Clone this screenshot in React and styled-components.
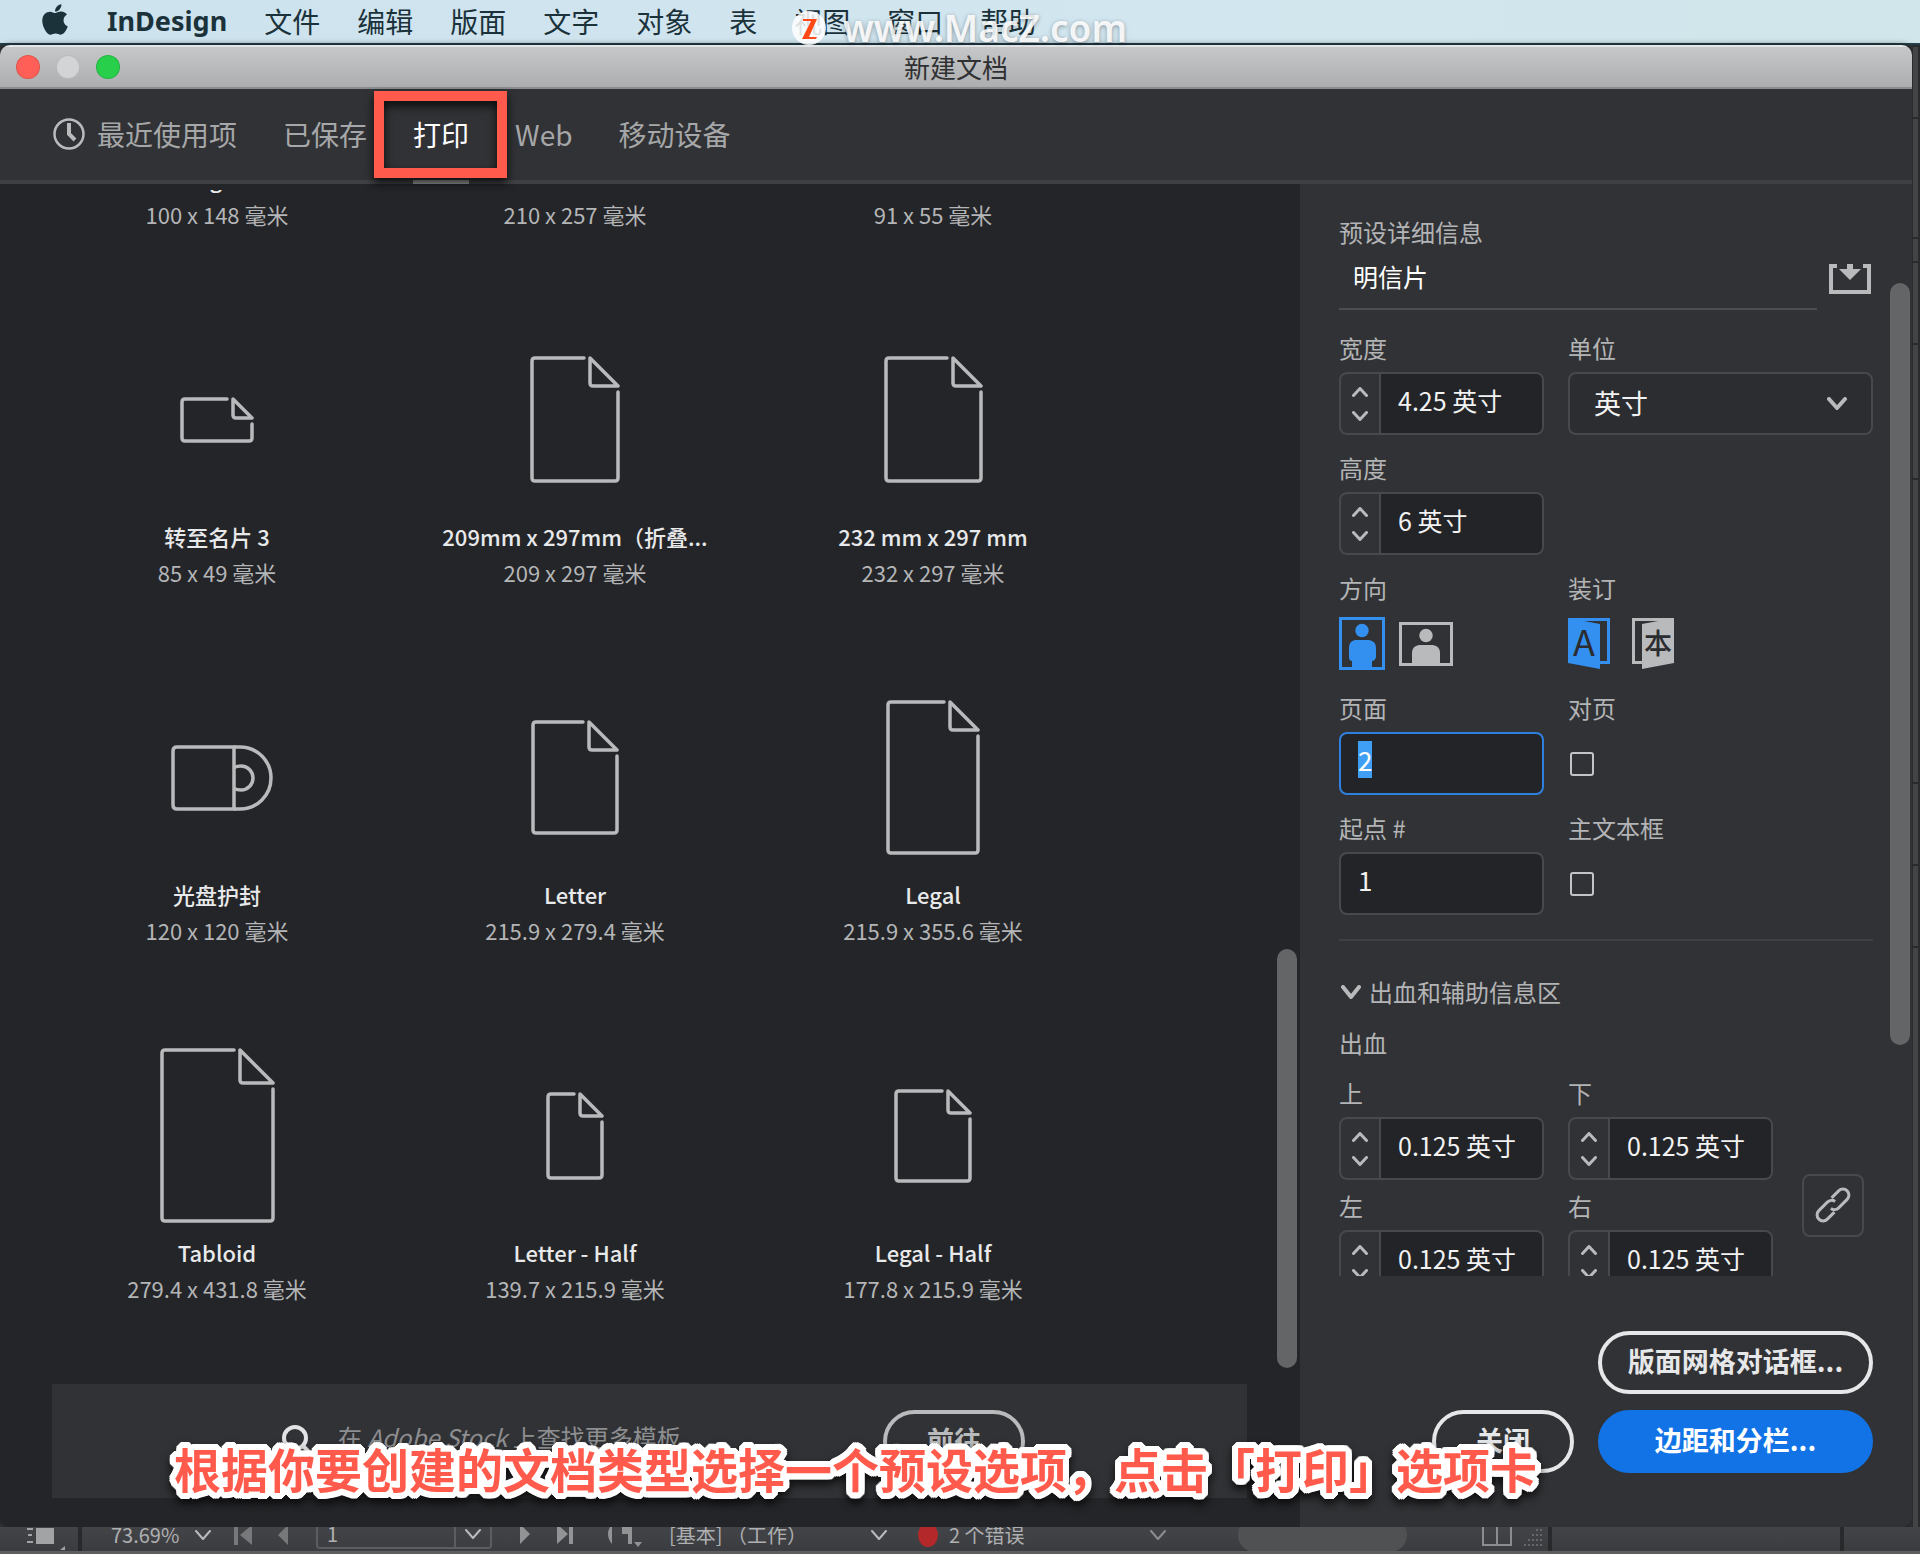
import { useEffect, useRef, useState } from "react";
import styled, { createGlobalStyle, css } from "styled-components";
import { FaApple } from "react-icons/fa";

const GlobalStyle = createGlobalStyle`
  * {
    box-sizing: border-box;
  }
  body {
    margin: 0;
    background: #3b3c3f;
    font-family: "Noto Sans CJK SC", "Noto Sans", sans-serif;
  }
  button, input, select {
    margin: 0;
    padding: 0;
    border: 0;
    background: none;
    color: inherit;
    font: inherit;
  }
`;

const Desktop = styled.div`
  position: relative;
  display: flex;
  flex-direction: column;
  height: 100vh;
  overflow: hidden;
  background: #3b3c3f;
`;

/* ---- menu bar ---- */

const MenuBar = styled.nav`
  display: flex;
  align-items: center;
  gap: 37px;
  height: 45px;
  flex: none;
  padding: 0 42px 2px;
  background: linear-gradient(90deg, #cce2ed, #d2e6ef 60%, #d0e6ea);
  border-bottom: 2px solid #24404c;
  color: #1b323b;
`;

const AppleMark = styled.span`
  display: flex;
  width: 28px;
  padding-bottom: 2px;
  svg {
    width: 26px;
    height: 35px;
    flex: none;
  }
`;

const MenuItem = styled.button`
  font-size: ${({ $app }) => ($app ? 27 : 28)}px;
  font-weight: ${({ $app }) => ($app ? 700 : 400)};
  ${({ $app }) => $app && 'font-family: "Noto Sans", sans-serif;'}
  line-height: 36px;
  white-space: nowrap;
`;

const Watermark = styled.div`
  position: absolute;
  left: 792px;
  top: 5px;
  display: flex;
  align-items: center;
  gap: 16px;
  color: rgba(255, 255, 255, 0.9);
  font-family: "Noto Sans", sans-serif;
  font-size: 37px;
  font-weight: 600;
  line-height: 46px;
  text-shadow: 0 1px 4px rgba(0, 0, 0, 0.35);
`;

/* ---- dialog ---- */

const Workspace = styled.div`
  display: flex;
  flex: 1;
  min-height: 0;
  background: #333437;
`;

const Dialog = styled.main`
  display: flex;
  flex: 1;
  flex-direction: column;
  min-width: 0;
  border-radius: 10px;
  overflow: hidden;
  background: #313235;
  box-shadow: 0 0 6px rgba(0, 0, 0, 0.6);
`;

const DockEdge = styled.div`
  display: flex;
  flex-direction: column;
  width: 8px;
  padding: 2px 2px 0 1px;
  gap: 2px;
  background: #2a2b2d;
`;

const DockPanel = styled.div`
  flex: ${({ $size }) => $size} 1 0;
  background: #434446;
`;

const TitleBar = styled.header`
  position: relative;
  display: flex;
  align-items: center;
  justify-content: center;
  flex: none;
  height: 44px;
  border-top: 2px solid #e4e5e6;
  border-bottom: 2px solid #8b8c8e;
  background: linear-gradient(#c6c7c8, #adaeb0);
`;

const Lights = styled.div`
  position: absolute;
  left: 16px;
  display: flex;
  gap: 16px;
`;

const Light = styled.button`
  width: 24px;
  height: 24px;
  border-radius: 50%;
  border: 1px solid rgba(0, 0, 0, 0.12);
  background: ${({ $color }) => $color};
`;

const Title = styled.h1`
  margin: 0;
  color: #303133;
  font-size: 26px;
  font-weight: 400;
  line-height: 36px;
`;

const Tabs = styled.div`
  display: flex;
  gap: 46px;
  flex: none;
  height: 95px;
  padding-left: 53px;
  border-bottom: 4px solid #3f4043;
`;

const Tab = styled.button`
  position: relative;
  display: flex;
  align-items: center;
  gap: 12px;
  margin-bottom: -4px;
  padding-bottom: 2px;
  border-bottom: 4px solid ${({ $active }) => ($active ? "#9d9ea0" : "transparent")};
  color: ${({ $active }) => ($active ? "#ffffff" : "#a6a7a8")};
  font-size: 28px;
  white-space: nowrap;
`;

const TabMarker = styled.span`
  position: absolute;
  top: 2px;
  right: -38px;
  bottom: 2px;
  left: -39px;
  border: 10px solid #ff5a4b;
  filter: drop-shadow(0 5px 5px rgba(0, 0, 0, 0.8));
`;

const Body = styled.div`
  display: flex;
  flex: 1;
  min-height: 0;
`;

const Browser = styled.section`
  display: flex;
  flex: 1;
  flex-direction: column;
  min-width: 0;
  padding: 6px 0 29px;
  background: #242528;
`;

const BrowserScroll = styled.div`
  display: flex;
  flex: 1;
  min-height: 0;
  padding-right: 3px;
`;

const PresetViewport = styled.div`
  display: flex;
  flex: 1;
  flex-direction: column;
  justify-content: flex-end;
  min-width: 0;
  overflow: hidden;
`;

const PresetGrid = styled.div`
  display: grid;
  grid-template-columns: repeat(auto-fill, 358px);
  row-gap: 87px;
  padding: 0 0 64px 38px;
`;

const Preset = styled.button`
  display: flex;
  flex-direction: column;
  align-items: center;
  line-height: 36px;
  font-size: 22px;
`;

const PresetArt = styled.span`
  display: flex;
  align-items: center;
  justify-content: center;
  height: 199px;
  padding-top: 2px;
`;

const PresetName = styled.span`
  white-space: nowrap;
  color: #e8e9ea;
  font-weight: 500;
`;

const PresetSize = styled.span`
  color: #b4b5b7;
  white-space: nowrap;
`;

const ScrollTrack = styled.div`
  display: flex;
  flex: none;
  flex-direction: column;
  width: 20px;
`;

const ScrollSpace = styled.div`
  flex: ${({ $size }) => $size} 1 0;
`;

const ScrollThumb = styled.div`
  flex: ${({ $size }) => $size} 1 0;
  border-radius: 10px;
  background: #646567;
`;

const StockBar = styled.div`
  display: flex;
  align-items: center;
  flex: none;
  height: 114px;
  margin: 14px 53px 0 52px;
  padding-left: 228px;
  background: #313235;
`;

const StockText = styled.p`
  flex: none;
  width: 545px;
  margin: 0 0 10px 20px;
  color: #8d8e90;
  font-size: 24px;
  white-space: nowrap;
`;

const PillButton = styled.button`
  flex: none;
  min-width: 142px;
  height: 63px;
  padding: 0 28px 4px;
  border: 4px solid ${({ $tone }) => $tone};
  border-radius: 32px;
  color: ${({ $tone }) => $tone};
  font-size: 27px;
  font-weight: 700;
  white-space: nowrap;
  ${({ $primary }) =>
    $primary &&
    css`
      border-color: #1273e6;
      background: #1273e6;
      color: #ffffff;
    `}
`;

/* ---- details panel ---- */

const Details = styled.aside`
  display: flex;
  flex: none;
  flex-direction: column;
  width: 612px;
`;

const DetailsScroll = styled.div`
  display: flex;
  flex: 1;
  min-height: 0;
  padding-right: 2px;
`;

const DetailsViewport = styled.div`
  flex: 1;
  padding: 34px 17px 0 39px;
  overflow: hidden;
`;

const Label = styled.label`
  display: block;
  padding-bottom: 2px;
  color: #b3b4b6;
  font-size: 24px;
  line-height: 28px;
  white-space: nowrap;
`;

const NameRow = styled.div`
  display: flex;
  align-items: center;
  gap: 12px;
  margin-bottom: 24px;
  padding-right: 2px;
`;

const NameInput = styled.input`
  flex: 1;
  min-width: 0;
  height: 62px;
  padding: 0 14px 4px;
  border-bottom: 2px solid #4c4d50;
  color: #ffffff;
  font-size: 25px;
`;

const IconButton = styled.button`
  display: flex;
  align-items: center;
`;

const FieldGrid = styled.div`
  display: grid;
  grid-template-columns: 205px 1fr;
  gap: 19px 24px;
`;

const FieldBox = styled.div`
  display: flex;
  flex-direction: column;
  gap: 8px;
`;

const frame = css`
  height: 63px;
  border: 2px solid #48494c;
  border-radius: 8px;
`;

const StepperFrame = styled.div`
  ${frame}
  display: flex;
  overflow: hidden;
`;

const StepperButtons = styled.div`
  display: flex;
  flex: none;
  flex-direction: column;
  align-items: center;
  justify-content: center;
  gap: 14px;
  width: 40px;
  border-right: 2px solid #48494c;
`;

const StepButton = styled.button`
  display: flex;
`;

const StepperInput = styled.input`
  flex: 1;
  min-width: 0;
  padding: 0 0 8px 17px;
  background: #232427;
  color: #f2f2f3;
  font-size: 25px;
`;

const TextInput = styled.input`
  ${frame}
  width: 205px;
  padding: 0 17px 8px;
  background: #232427;
  color: #f2f2f3;
  font-size: 26px;
  &:focus {
    outline: none;
    border-color: #2f80de;
  }
  &::selection {
    background: #3f9ff5;
    color: #ffffff;
  }
`;

const SelectFrame = styled.div`
  ${frame}
  display: grid;
  grid-template-columns: 1fr 44px;
  align-items: center;
  background: #2c2d30;
  color: #f2f2f3;
  select {
    grid-area: 1 / 1 / 2 / 3;
    height: 59px;
    padding: 0 0 3px 24px;
    appearance: none;
    font-size: 27px;
  }
  svg {
    grid-area: 1 / 2;
    pointer-events: none;
  }
`;

const IconRow = styled.div`
  display: flex;
  align-items: center;
  gap: ${({ $gap }) => $gap}px;
  height: 63px;
`;

const CheckRow = styled.div`
  display: flex;
  align-items: center;
  height: 63px;
  padding-left: 2px;
`;

const Checkbox = styled.input`
  appearance: none;
  width: 24px;
  height: 24px;
  border: 2px solid #c3c4c5;
  border-radius: 3px;
  &:checked {
    background: #c3c4c5;
  }
`;

const Divider = styled.hr`
  height: 2px;
  margin: 24px 0 36px;
  border: 0;
  background: #3f4043;
`;

const SectionToggle = styled.button`
  display: flex;
  align-items: center;
  gap: 8px;
  padding-left: 2px;
  margin-bottom: 21px;
  color: #b3b4b6;
  font-size: 24px;
  line-height: 30px;
`;

const GroupTitle = styled.div`
  margin-bottom: 21px;
  color: #b3b4b6;
  font-size: 24px;
  line-height: 30px;
`;

const Bleed = styled.div`
  display: flex;
  align-items: center;
  gap: 29px;
`;

const BleedGrid = styled.div`
  display: grid;
  grid-template-columns: 205px 205px;
  gap: 12px 24px;
`;

const LinkButton = styled.button`
  ${frame}
  display: flex;
  align-items: center;
  justify-content: center;
  width: 62px;
  margin-top: 38px;
`;

const Actions = styled.footer`
  display: flex;
  flex: none;
  flex-direction: column;
  align-items: flex-end;
  gap: 16px;
  padding: 55px 39px 54px;
`;

const ActionRow = styled.div`
  display: flex;
  gap: 24px;
`;

const WideAction = styled(PillButton)`
  width: 275px;
  padding: 0 0 4px;
`;

/* ---- status bar behind the dialog ---- */

const StatusBar = styled.footer`
  display: flex;
  flex: none;
  align-items: flex-end;
  height: 27px;
  overflow: hidden;
  border-bottom: 3px solid #5d5e60;
  background: linear-gradient(#434447, #3b3c3f);
  color: #aeafb1;
  font-size: 20px;
  line-height: 32px;
  white-space: nowrap;
`;

const StatusCell = styled.div`
  display: flex;
  align-items: center;
  flex: ${({ $grow }) => ($grow ? 1 : "none")};
  width: ${({ $width }) => $width}px;
  height: 32px;
  padding-left: ${({ $pad = 0 }) => $pad}px;
  border-right: ${({ $line }) => ($line ? "4px solid #29292b" : "0")};
`;

const PageBox = styled.div`
  display: flex;
  align-items: center;
  flex: none;
  width: 176px;
  height: 30px;
  margin: 0 24px 2px 0;
  border: 2px solid #5c5d5f;
  border-radius: 4px;
  input {
    flex: 1;
    min-width: 0;
    padding-left: 9px;
    font-size: 20px;
  }
  svg {
    box-sizing: content-box;
    padding: 10px 9px;
    border-left: 2px solid #5c5d5f;
  }
`;

const ErrorDot = styled.span`
  width: 20px;
  height: 24px;
  margin-right: 11px;
  border-radius: 50%;
  background: #b3292b;
`;

const HorizontalThumb = styled.div`
  width: 169px;
  height: 34px;
  border-radius: 17px;
  background: #505153;
`;

// a ring of hard shadows gives the caption an outline with round corners
const outline = (radius, color) =>
  Array.from({ length: 24 }, (_, i) => {
    const angle = (i / 24) * Math.PI * 2;
    return `${Math.round(Math.cos(angle) * radius)}px ${Math.round(Math.sin(angle) * radius)}px 0 ${color}`;
  }).join(", ");

const Caption = styled.div`
  position: absolute;
  left: 174px;
  bottom: 56px;
  color: #ff5a4b;
  font-size: 47px;
  font-weight: 700;
  line-height: 60px;
  white-space: nowrap;
  text-shadow: ${outline(3, "#ffffff")}, ${outline(6, "#ffffff")};
  filter: drop-shadow(0 5px 4px rgba(0, 0, 0, 0.7));
`;

const menus = ["文件", "编辑", "版面", "文字", "对象", "表", "视图", "窗口", "帮助"];

const tabs = ["最近使用项", "已保存", "打印", "Web", "移动设备"];

const presets = [
  { name: "Hagaki", size: "100 x 148 毫米", w: 60, h: 88, fold: 24 },
  { name: "B5", size: "210 x 257 毫米", w: 90, h: 110, fold: 30 },
  { name: "Card", size: "91 x 55 毫米", w: 74, h: 46, fold: 22 },
  { name: "转至名片 3", size: "85 x 49 毫米", w: 74, h: 46, fold: 22 },
  { name: "209mm x 297mm（折叠...", size: "209 x 297 毫米", w: 90, h: 127, fold: 31 },
  { name: "232 mm x 297 mm", size: "232 x 297 毫米", w: 99, h: 127, fold: 31 },
  { name: "光盘护封", size: "120 x 120 毫米", disc: true },
  { name: "Letter", size: "215.9 x 279.4 毫米", w: 88, h: 115, fold: 31 },
  { name: "Legal", size: "215.9 x 355.6 毫米", w: 94, h: 155, fold: 31 },
  { name: "Tabloid", size: "279.4 x 431.8 毫米", w: 115, h: 175, fold: 36 },
  { name: "Letter - Half", size: "139.7 x 215.9 毫米", w: 58, h: 88, fold: 25 },
  { name: "Legal - Half", size: "177.8 x 215.9 毫米", w: 78, h: 94, fold: 25 },
];

function PageIcon({ w, h, fold }) {
  const r = w - 2;
  const b = h - 2;
  const fx = w - fold + 1;
  return (
    <svg width={w} height={h} fill="none" stroke="#b9babc" strokeWidth="3.5" strokeLinecap="round" strokeLinejoin="round">
      <path d={`M${fx - 6} 2H5Q2 2 2 5V${b - 3}Q2 ${b} 5 ${b}H${r - 3}Q${r} ${b} ${r} ${b - 3}V${fold + 5}`} />
      <path d={`M${fx} 2L${r} ${fold - 1}H${fx + 3}Q${fx} ${fold - 1} ${fx} ${fold - 4}Z`} />
    </svg>
  );
}

function DiscIcon() {
  return (
    <svg width="112" height="66" viewBox="-10 0 112 66" fill="none" stroke="#b9babc" strokeWidth="3.5">
      <path d="M63 2H6Q2 2 2 6V60Q2 64 6 64H63Z" />
      <path d="M63 2H69A31 31 0 0 1 69 64H63" />
      <path d="M63 22.500Q66 21 70 21A12 12 0 0 1 70 45Q66 45 63 43.500" />
    </svg>
  );
}

function Chevron({ width = 20, height = 12, up = false, color = "#b9babc", stroke = 4 }) {
  const s = stroke / 2;
  const d = up
    ? `M${s} ${height - s}L${width / 2} ${s}L${width - s} ${height - s}`
    : `M${s} ${s}L${width / 2} ${height - s}L${width - s} ${s}`;
  return (
    <svg width={width} height={height} fill="none" stroke={color} strokeWidth={stroke} strokeLinecap="round" strokeLinejoin="round">
      <path d={d} />
    </svg>
  );
}

function ClockIcon() {
  return (
    <svg width="32" height="32" fill="none" stroke="#b9babc">
      <circle cx="16" cy="16" r="14.500" strokeWidth="2.500" />
      <path d="M16 5V16L22 22" strokeWidth="4" />
    </svg>
  );
}

function SaveIcon() {
  return (
    <svg width="42" height="30">
      <path d="M8 2H2V28H40V2H34" fill="none" stroke="#b9babc" strokeWidth="4" />
      <path d="M18 0H24V5H32L21 16L10 5H18Z" fill="#b9babc" />
    </svg>
  );
}

function PortraitIcon() {
  return (
    <svg width="46" height="53" fill="#338ff0">
      <rect x="1.500" y="1.500" width="43" height="50" fill="none" stroke="#338ff0" strokeWidth="3" />
      <circle cx="23" cy="13.500" r="6.700" />
      <path d="M16 23H30Q37 24 37 31V40Q36 44 33 44V52H13V44Q10 44 10 40V31Q10 24 16 23Z" />
    </svg>
  );
}

function LandscapeIcon() {
  return (
    <svg width="54" height="44" fill="#b9babc">
      <rect x="1.500" y="1.500" width="51" height="41" fill="none" stroke="#b9babc" strokeWidth="3" />
      <circle cx="27" cy="13.500" r="6.700" />
      <path d="M20 23H34Q41 24 41 31V42H13V31Q13 24 20 23Z" />
    </svg>
  );
}

function BindLeftIcon() {
  return (
    <svg width="42" height="52">
      <path d="M0 1.500H40.500V44.500H32" fill="none" stroke="#338ff0" strokeWidth="3" />
      <path d="M0 0L16 3L32 6V51L0 45Z" fill="#338ff0" />
      <text x="16" y="38" textAnchor="middle" fontSize="36" fontWeight="400" fill="#2b2c2f">A</text>
    </svg>
  );
}

function BindRightIcon() {
  return (
    <svg width="42" height="52">
      <path d="M42 1.500H1.500V44.500H10" fill="none" stroke="#b9babc" strokeWidth="3" />
      <path d="M42 0L26 3L10 6V51L42 45Z" fill="#b9babc" />
      <text x="26" y="36" textAnchor="middle" fontSize="28" fontWeight="500" fill="#2b2c2f">本</text>
    </svg>
  );
}

function ChainIcon() {
  const half = "M4 -6H14A6 6 0 0 1 14 6H2A6 6 0 0 1 -4 1";
  return (
    <svg width="36" height="36" viewBox="-18 -18 36 36" fill="none" stroke="#b9babc" strokeWidth="3">
      <g transform="rotate(-45)">
        <path d={half} />
        <path d={half} transform="rotate(180)" />
      </g>
    </svg>
  );
}

function Stepper({ id, label, initial }) {
  const [value, setValue] = useState(initial);
  const step = (delta) => setValue((v) => `${parseFloat(v) + delta} 英寸`);
  return (
    <FieldBox>
      <Label htmlFor={id}>{label}</Label>
      <StepperFrame>
        <StepperButtons>
          <StepButton aria-label={`${label} +`} onClick={() => step(0.125)}>
            <Chevron up width={16} height={10} stroke={3} />
          </StepButton>
          <StepButton aria-label={`${label} -`} onClick={() => step(-0.125)}>
            <Chevron width={16} height={10} stroke={3} />
          </StepButton>
        </StepperButtons>
        <StepperInput id={id} value={value} onChange={(e) => setValue(e.target.value)} />
      </StepperFrame>
    </FieldBox>
  );
}

function PresetList() {
  return (
    <Browser>
      <BrowserScroll>
        <PresetViewport>
          <PresetGrid>
            {presets.map(({ name, size, disc, ...shape }) => (
              <Preset key={name}>
                <PresetArt>{disc ? <DiscIcon /> : <PageIcon {...shape} />}</PresetArt>
                <PresetName>{name}</PresetName>
                <PresetSize>{size}</PresetSize>
              </Preset>
            ))}
          </PresetGrid>
        </PresetViewport>
        <ScrollTrack>
          <ScrollSpace $size={759} />
          <ScrollThumb $size={419} />
          <ScrollSpace $size={2} />
        </ScrollTrack>
      </BrowserScroll>
      <StockBar>
        <svg width="38" height="38" fill="none" stroke="#e2e3e4" strokeWidth="4">
          <circle cx="15" cy="16" r="11" />
          <path d="M23 24L34 35" />
        </svg>
        <StockText>
          在 <em>Adobe Stock</em> 上查找更多模板
        </StockText>
        <PillButton $tone="#b9babc">前往</PillButton>
      </StockBar>
    </Browser>
  );
}

function PresetDetails() {
  const pagesRef = useRef(null);

  useEffect(() => {
    pagesRef.current.focus();
    pagesRef.current.select();
  }, []);

  return (
    <Details>
      <DetailsScroll>
        <DetailsViewport>
          <Label htmlFor="preset-name">预设详细信息</Label>
          <NameRow>
            <NameInput id="preset-name" defaultValue="明信片" />
            <IconButton aria-label="存储预设">
              <SaveIcon />
            </IconButton>
          </NameRow>
          <FieldGrid>
            <Stepper id="width" label="宽度" initial="4.25 英寸" />
            <FieldBox>
              <Label htmlFor="unit">单位</Label>
              <SelectFrame>
                <select id="unit" defaultValue="in">
                  <option value="in">英寸</option>
                  <option value="mm">毫米</option>
                </select>
                <Chevron width={20} height={13} />
              </SelectFrame>
            </FieldBox>
            <Stepper id="height" label="高度" initial="6 英寸" />
            <span />
            <FieldBox>
              <Label as="span">方向</Label>
              <IconRow $gap={14}>
                <IconButton aria-label="纵向" aria-pressed="true">
                  <PortraitIcon />
                </IconButton>
                <IconButton aria-label="横向" aria-pressed="false">
                  <LandscapeIcon />
                </IconButton>
              </IconRow>
            </FieldBox>
            <FieldBox>
              <Label as="span">装订</Label>
              <IconRow $gap={22}>
                <IconButton aria-label="从左到右" aria-pressed="true">
                  <BindLeftIcon />
                </IconButton>
                <IconButton aria-label="从右到左" aria-pressed="false">
                  <BindRightIcon />
                </IconButton>
              </IconRow>
            </FieldBox>
            <FieldBox>
              <Label htmlFor="pages">页面</Label>
              <TextInput id="pages" ref={pagesRef} defaultValue="2" />
            </FieldBox>
            <FieldBox>
              <Label htmlFor="facing">对页</Label>
              <CheckRow>
                <Checkbox id="facing" type="checkbox" />
              </CheckRow>
            </FieldBox>
            <FieldBox>
              <Label htmlFor="start">起点 #</Label>
              <TextInput id="start" defaultValue="1" />
            </FieldBox>
            <FieldBox>
              <Label htmlFor="frame">主文本框</Label>
              <CheckRow>
                <Checkbox id="frame" type="checkbox" />
              </CheckRow>
            </FieldBox>
          </FieldGrid>
          <Divider />
          <SectionToggle aria-expanded="true">
            <Chevron width={20} height={14} />
            出血和辅助信息区
          </SectionToggle>
          <GroupTitle>出血</GroupTitle>
          <Bleed>
            <BleedGrid>
              <Stepper id="bleed-top" label="上" initial="0.125 英寸" />
              <Stepper id="bleed-bottom" label="下" initial="0.125 英寸" />
              <Stepper id="bleed-left" label="左" initial="0.125 英寸" />
              <Stepper id="bleed-right" label="右" initial="0.125 英寸" />
            </BleedGrid>
            <LinkButton aria-label="使所有设置相同">
              <ChainIcon />
            </LinkButton>
          </Bleed>
        </DetailsViewport>
        <ScrollTrack>
          <ScrollSpace $size={99} />
          <ScrollThumb $size={761} />
          <ScrollSpace $size={231} />
        </ScrollTrack>
      </DetailsScroll>
      <Actions>
        <WideAction $tone="#e6e7e8">版面网格对话框...</WideAction>
        <ActionRow>
          <PillButton $tone="#e6e7e8">关闭</PillButton>
          <WideAction $primary>边距和分栏...</WideAction>
        </ActionRow>
      </Actions>
    </Details>
  );
}

function Status() {
  return (
    <StatusBar>
      <StatusCell $width={82} $pad={27} $line>
        <svg width="42" height="30" fill="#a2a3a5">
          <path d="M9 8H27V24H9ZM0 8H6V10H0ZM1 14H5V16H1ZM0 21H6V23H0ZM8 1H10V5H8ZM17 1H19V5H17ZM25 1H27V5H25ZM38 26V30H33Z" />
        </svg>
      </StatusCell>
      <StatusCell $width={113} $pad={29}>73.69%</StatusCell>
      <StatusCell $width={39}>
        <Chevron width={16} height={10} stroke={2} />
      </StatusCell>
      <StatusCell $width={82}>
        <svg width="56" height="20" fill="#77787a">
          <path d="M0 0H4V20H0ZM18 0V20L6 10ZM54 0V20L44 10Z" />
        </svg>
      </StatusCell>
      <PageBox>
        <input aria-label="页码" defaultValue="1" />
        <Chevron width={16} height={10} stroke={2} />
      </PageBox>
      <StatusCell $width={153} $pad={4}>
        <svg width="124" height="24" fill="#929395">
          <path d="M0 1L10 11L0 21ZM37 1L48 11L37 21ZM49 1H53V21H49ZM92 1Q84 11 92 21ZM102 3H112V21H108V11H102ZM114 19H122L118 24Z" />
        </svg>
      </StatusCell>
      <StatusCell $width={202}>[基本] （工作）</StatusCell>
      <StatusCell $width={47}>
        <Chevron width={16} height={10} stroke={2} />
      </StatusCell>
      <StatusCell $width={232}>
        <ErrorDot />2 个错误
      </StatusCell>
      <StatusCell $width={88}>
        <Chevron width={16} height={10} stroke={2} color="#8b8c8e" />
      </StatusCell>
      <StatusCell $grow>
        <HorizontalThumb />
      </StatusCell>
      <StatusCell $width={70} $line>
        <svg width="64" height="28" fill="none" stroke="#8b8c8e" strokeWidth="2">
          <path d="M1 0V24H29V0M15 0V24" />
          <path d="M42 24H62M46 19H62M50 14H62M54 9H62M58 4H62" strokeDasharray="2 2" stroke="#66676a" />
        </svg>
      </StatusCell>
      <StatusCell $width={292} $line />
      <StatusCell $width={76} />
    </StatusBar>
  );
}

export default function App() {
  return (
    <Desktop>
      <GlobalStyle />
      <MenuBar>
        <AppleMark>
          <FaApple />
        </AppleMark>
        <MenuItem $app>InDesign</MenuItem>
        {menus.map((menu) => (
          <MenuItem key={menu}>{menu}</MenuItem>
        ))}
      </MenuBar>
      <Workspace>
        <Dialog>
          <TitleBar>
            <Lights>
              <Light $color="#ff5f57" aria-label="关闭窗口" />
              <Light $color="#d3d4d6" aria-label="最小化" />
              <Light $color="#28cf4a" aria-label="缩放" />
            </Lights>
            <Title>新建文档</Title>
          </TitleBar>
          <Tabs role="tablist">
            {tabs.map((tab, i) => (
              <Tab key={tab} role="tab" aria-selected={tab === "打印"} $active={tab === "打印"}>
                {i === 0 && <ClockIcon />}
                {tab}
                {tab === "打印" && <TabMarker />}
              </Tab>
            ))}
          </Tabs>
          <Body>
            <PresetList />
            <PresetDetails />
          </Body>
        </Dialog>
        <DockEdge>
          {[70, 118, 22, 80, 134, 302, 80, 80, 580].map((size, i) => (
            <DockPanel key={i} $size={size} />
          ))}
        </DockEdge>
      </Workspace>
      <Status />
      <Watermark>
        <svg width="35" height="35">
          <circle cx="17" cy="17" r="17" fill="#ffffff" fillOpacity="0.85" />
          <path d="M11 8H25L17 26H25L24 28H10L19 10H11Z" fill="#ff4a17" />
        </svg>
        www.MacZ.com
      </Watermark>
      <Caption>根据你要创建的文档类型选择一个预设选项，点击「打印」选项卡</Caption>
    </Desktop>
  );
}
